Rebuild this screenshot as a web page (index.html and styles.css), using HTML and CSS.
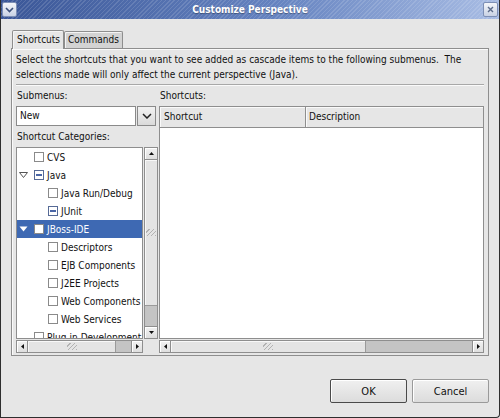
FILE: index.html
```html
<!DOCTYPE html>
<html>
<head>
    <meta charset="UTF-8">
    <title>Customize Perspective</title>
    <link rel="stylesheet" href="styles.css">
</head>
<body>
    <div class="window">
        <div class="titlebar">
            <span class="tb-btn">
                <svg width="9" height="6" viewBox="0 0 9 6"><polyline points="1,1 4.5,4.5 8,1" fill="none" stroke="#3b4f7a" stroke-width="1.6"/></svg>
            </span>
            <span class="title">Customize Perspective</span>
            <span class="tb-btn">
                <svg width="7" height="7" viewBox="0 0 7 7"><path d="M1 1L6 6M6 1L1 6" stroke="#5b6b8a" stroke-width="1.4"/></svg>
            </span>
        </div>
        <div class="content">
            <div class="tabs">
                <div class="tab active">Shortcuts</div>
                <div class="tab">Commands</div>
            </div>
            <div class="panel">
                <p class="desc">Select the shortcuts that you want to see added as cascade items to the following submenus.&nbsp; The<br>selections made will only affect the current perspective (Java).</p>
                <div class="sep"></div>
                <div class="columns">
                    <div class="col col-left">
                        <div class="label">Submenus:</div>
                        <div class="combo">
                            <span class="combo-text">New</span>
                            <span class="combo-btn">
                                <svg width="10" height="6" viewBox="0 0 10 6"><polyline points="1,1 5,5 9,1" fill="none" stroke="#222" stroke-width="1.5"/></svg>
                            </span>
                        </div>
                        <div class="label label-gap">Shortcut Categories:</div>
                        <div class="scrolled tree">
                            <div class="view">
                                <div class="row"><span class="exp"></span><span class="check"></span>CVS</div>
                                <div class="row"><span class="exp"><svg width="9" height="6" viewBox="0 0 9 6"><polygon points="0.5,0.5 8.5,0.5 4.5,5.5" fill="#fff" stroke="#555"/></svg></span><span class="check mixed"></span>Java</div>
                                <div class="row child"><span class="exp"></span><span class="check"></span>Java Run/Debug</div>
                                <div class="row child"><span class="exp"></span><span class="check mixed"></span>JUnit</div>
                                <div class="row selected"><span class="exp"><svg width="9" height="6" viewBox="0 0 9 6"><polygon points="0.5,0.5 8.5,0.5 4.5,5.5" fill="#fff"/></svg></span><span class="check"></span>JBoss-IDE</div>
                                <div class="row child"><span class="exp"></span><span class="check"></span>Descriptors</div>
                                <div class="row child"><span class="exp"></span><span class="check"></span>EJB Components</div>
                                <div class="row child"><span class="exp"></span><span class="check"></span>J2EE Projects</div>
                                <div class="row child"><span class="exp"></span><span class="check"></span>Web Components</div>
                                <div class="row child"><span class="exp"></span><span class="check"></span>Web Services</div>
                                <div class="row"><span class="exp"></span><span class="check"></span>Plug-in Development</div>
                            </div>
                            <div class="vscroll">
                                <span class="sb-btn"><svg width="5" height="3" viewBox="0 0 5 3"><polygon points="0,3 5,3 2.5,0" fill="#111"/></svg></span>
                                <span class="thumb thumb-v"><span class="grip"></span></span>
                                <span class="trough"></span>
                                <span class="sb-btn"><svg width="5" height="3" viewBox="0 0 5 3"><polygon points="0,0 5,0 2.5,3" fill="#111"/></svg></span>
                            </div>
                            <div class="hscroll">
                                <span class="sb-btn"><svg width="3" height="5" viewBox="0 0 3 5"><polygon points="3,0 3,5 0,2.5" fill="#111"/></svg></span>
                                <span class="thumb tree-thumb"><span class="grip"></span></span>
                                <span class="trough"></span>
                                <span class="sb-btn"><svg width="3" height="5" viewBox="0 0 3 5"><polygon points="0,0 0,5 3,2.5" fill="#111"/></svg></span>
                            </div>
                        </div>
                    </div>
                    <div class="col col-right">
                        <div class="label">Shortcuts:</div>
                        <div class="scrolled table">
                            <div class="view">
                                <div class="thead">
                                    <div class="th th-shortcut">Shortcut</div>
                                    <div class="th th-desc">Description</div>
                                </div>
                            </div>
                            <div class="hscroll">
                                <span class="sb-btn"><svg width="3" height="5" viewBox="0 0 3 5"><polygon points="3,0 3,5 0,2.5" fill="#111"/></svg></span>
                                <span class="thumb table-thumb"><span class="grip"></span></span>
                                <span class="trough"></span>
                                <span class="sb-btn"><svg width="3" height="5" viewBox="0 0 3 5"><polygon points="0,0 0,5 3,2.5" fill="#111"/></svg></span>
                            </div>
                        </div>
                    </div>
                </div>
            </div>
            <div class="buttons">
                <button class="btn default">OK</button>
                <button class="btn">Cancel</button>
            </div>
        </div>
    </div>
</body>
</html>
```

FILE: styles.css
```css
body {
    margin: 0;
    font-family: "DejaVu Sans Condensed", "DejaVu Sans", sans-serif;
    font-stretch: condensed;
    font-size: 10px;
    color: #111;
    background-color: #e6e6e6;
}
.window {
    width: 500px;
    height: 418px;
    box-sizing: border-box;
    border: 1px solid #2e2e2e;
    border-top: none;
    border-radius: 0 0 4px 0;
    background-color: #e6e6e6;
    overflow: hidden;
}
.titlebar {
    height: 19px;
    margin: 0 -1px;
    display: flex;
    align-items: center;
    justify-content: space-between;
    padding: 0 2px;
    background-color: #5573b4;
    background-image:
        repeating-linear-gradient(135deg, rgba(255,255,255,0.13) 0 1px, transparent 1px 3px),
        linear-gradient(to right, #3a5697, #6583c0 55%, #a9bde4);
}
.tb-btn {
    width: 13px;
    height: 13px;
    border: 1px solid #7d8fb5;
    border-radius: 2px;
    background: linear-gradient(#f4f6fa, #c9d2e4);
    display: flex;
    align-items: center;
    justify-content: center;
}
.title {
    color: #fff;
    font-weight: bold;
    font-size: 10px;
    text-shadow: 0 1px 1px rgba(0,0,0,0.35);
}
.content {
    padding: 10px 10px 0 10px;
}
.tabs {
    display: flex;
    align-items: flex-end;
    height: 19px;
}
.tab {
    height: 16px;
    line-height: 16px;
    padding: 0 3px;
    border: 1px solid #8e8e8e;
    border-bottom: none;
    border-radius: 2px 2px 0 0;
    background-color: #d3d3d3;
    box-shadow: inset 1px 1px 0 #f4f4f4;
}
.tab.active {
    height: 18px;
    line-height: 18px;
    margin-left: 1px;
    padding: 0 3px 0 4px;
    background-color: #e6e6e6;
    position: relative;
    top: 1px;
    z-index: 1;
}
.panel {
    width: 478px;
    height: 308px;
    box-sizing: border-box;
    border: 1px solid #8e8e8e;
    box-shadow: inset 1px 1px 0 #fafafa;
    padding: 3px 4px 2px 4px;
    display: flex;
    flex-direction: column;
}
.desc {
    margin: 0;
    line-height: 15px;
    white-space: nowrap;
}
.sep {
    margin-top: 2px;
    border-top: 1px solid #a8a8a8;
    border-bottom: 1px solid #fafafa;
}
.columns {
    flex: 1;
    min-height: 0;
    margin-top: 2px;
    display: grid;
    grid-template-columns: 142px 1fr;
    grid-template-rows: minmax(0, 1fr);
    column-gap: 1px;
}
.col {
    display: flex;
    flex-direction: column;
    min-height: 0;
}
.label {
    height: 16px;
    line-height: 16px;
    margin-left: 1px;
}
.label-gap {
    margin-top: 3px;
}
.combo {
    margin-top: 2px;
    width: 140px;
    height: 20px;
    display: flex;
}
.combo-text {
    flex: 1;
    border: 1px solid #8a8a8a;
    background-color: #fff;
    padding-left: 3px;
    line-height: 18px;
}
.combo-btn {
    width: 17px;
    margin-left: 1px;
    border: 1px solid #8a8a8a;
    background: linear-gradient(#f2f2f2, #dadada);
    display: flex;
    align-items: center;
    justify-content: center;
}
.scrolled {
    flex: 1;
    min-height: 0;
    margin-top: 2px;
    display: grid;
    grid-template-rows: minmax(0, 1fr) 13px;
    row-gap: 1px;
}
.tree {
    grid-template-columns: 127px 14px;
    column-gap: 1px;
}
.table {
    grid-template-columns: 1fr;
}
.view {
    border: 1px solid #8e8e8e;
    background-color: #fff;
    overflow: hidden;
    min-height: 0;
}
.row {
    height: 18px;
    display: flex;
    align-items: center;
    white-space: nowrap;
}
.row.child {
    padding-left: 14px;
}
.row.selected {
    background-color: #3e69b3;
    color: #fff;
}
.exp {
    width: 15px;
    margin-left: 2px;
    display: flex;
    align-items: center;
}
.check {
    width: 8px;
    height: 8px;
    border: 1px solid #8a8a8a;
    background-color: #fff;
    margin-right: 3px;
    display: flex;
    align-items: center;
    justify-content: center;
}
.check.mixed {
    border-color: #566a96;
}
.check.mixed::after {
    content: "";
    width: 6px;
    height: 2px;
    background-color: #4a66a6;
}
.vscroll, .hscroll {
    display: flex;
    background-color: #c4c4c4;
    border: 1px solid #8e8e8e;
    min-height: 0;
}
.vscroll {
    flex-direction: column;
}
.sb-btn {
    display: flex;
    align-items: center;
    justify-content: center;
    background: linear-gradient(#f2f2f2, #dedede);
    box-shadow: inset 1px 1px 0 #fff;
}
.vscroll .sb-btn {
    height: 11px;
}
.vscroll .sb-btn:first-child {
    border-bottom: 1px solid #8e8e8e;
}
.vscroll .sb-btn:last-child {
    border-top: 1px solid #8e8e8e;
}
.hscroll .sb-btn {
    width: 10px;
}
.hscroll .sb-btn:first-child {
    border-right: 1px solid #8e8e8e;
}
.hscroll .sb-btn:last-child {
    border-left: 1px solid #8e8e8e;
}
.thumb {
    display: flex;
    align-items: center;
    justify-content: center;
    background-color: #e4e4e4;
    box-shadow: inset 1px 1px 0 #f8f8f8;
}
.vscroll .thumb {
    height: 145px;
    border-bottom: 1px solid #9a9a9a;
}
.hscroll .thumb {
    border-right: 1px solid #9a9a9a;
}
.tree-thumb {
    width: 87px;
}
.table-thumb {
    width: 194px;
}
.trough {
    flex: 1;
}
.grip {
    width: 10px;
    height: 7px;
    background-image: repeating-linear-gradient(135deg, transparent 0 2px, #b2b2b2 2px 3px);
}
.thead {
    display: flex;
    height: 20px;
    border-bottom: 1px solid #8e8e8e;
    background-color: #e6e6e6;
}
.th {
    line-height: 20px;
    padding-left: 4px;
    box-shadow: inset 1px 1px 0 #fafafa;
}
.th-shortcut {
    width: 141px;
    border-right: 1px solid #8e8e8e;
}
.th-desc {
    flex: 1;
    padding-left: 3px;
}
.buttons {
    display: flex;
    justify-content: flex-end;
    gap: 5px;
    margin-top: 23px;
}
.btn {
    width: 77px;
    height: 24px;
    font-family: inherit;
    font-stretch: condensed;
    font-size: 11px;
    color: #111;
    border: 1px solid #9a9a9a;
    border-radius: 2px;
    background: linear-gradient(#f0f0f0, #dcdcdc);
    box-shadow: inset 1px 1px 0 #fff;
}
.btn.default {
    border-color: #4a4a4a;
}
```
